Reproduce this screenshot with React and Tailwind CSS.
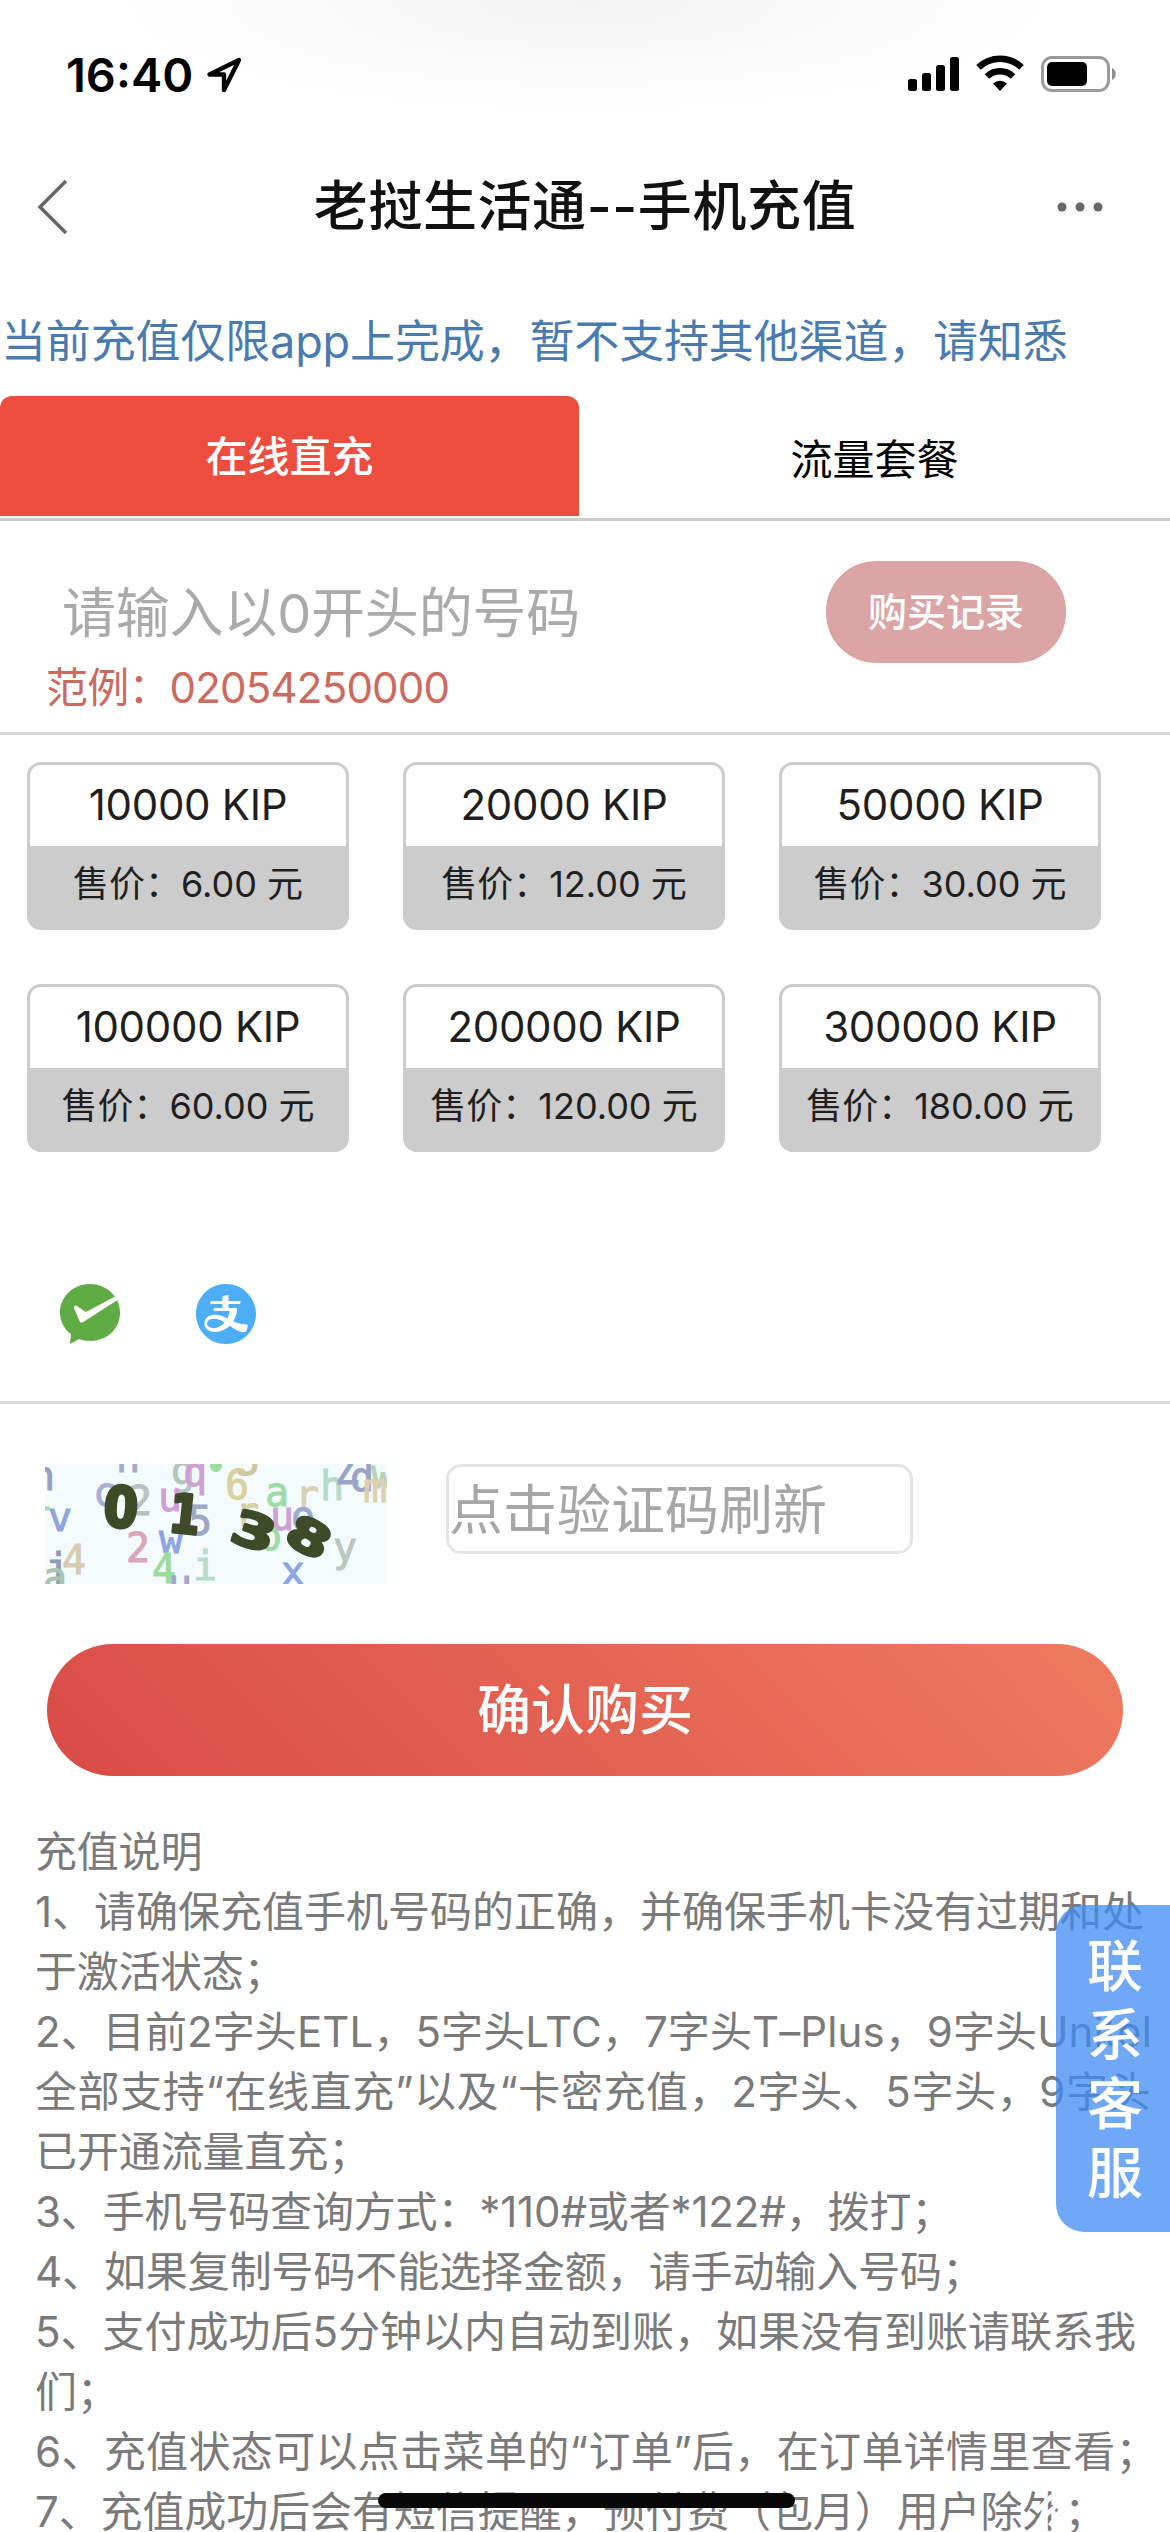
import React from 'react';
import { AiFillAlipayCircle } from 'react-icons/ai';

const packages = [
  { amount: '10000 KIP', price: '6.00' },
  { amount: '20000 KIP', price: '12.00' },
  { amount: '50000 KIP', price: '30.00' },
  { amount: '100000 KIP', price: '60.00' },
  { amount: '200000 KIP', price: '120.00' },
  { amount: '300000 KIP', price: '180.00' },
];

const notes = [
  { text: '充值说明', tracking: 'tracking-[-0.2px]' },
  { text: '1、请确保充值手机号码的正确，并确保手机卡没有过期和处', tracking: 'tracking-normal' },
  { text: '于激活状态；', tracking: 'tracking-[-0.3px]' },
  { text: '2、目前2字头ETL，5字头LTC，7字头T–Plus，9字头Unitel', tracking: 'tracking-[0.1px]' },
  { text: '全部支持“在线直充”以及“卡密充值，2字头、5字头，9字头', tracking: 'tracking-[0.6px]' },
  { text: '已开通流量直充；', tracking: 'tracking-[-0.1px]' },
  { text: '3、手机号码查询方式：*110#或者*122#，拨打；', tracking: 'tracking-[-0.15px]' },
  { text: '4、如果复制号码不能选择金额，请手动输入号码；', tracking: 'tracking-[-0.1px]' },
  { text: '5、支付成功后5分钟以内自动到账，如果没有到账请联系我', tracking: 'tracking-normal' },
  { text: '们；', tracking: 'tracking-[-0.3px]' },
  { text: '6、充值状态可以点击菜单的“订单”后，在订单详情里查看；', tracking: 'tracking-[0.35px]' },
  { text: '7、充值成功后会有短信提醒，预付费（包月）用户除外；', tracking: 'tracking-[-0.1px]' },
];

// Background letters of the captcha: [char, x, baseline, color]
const noise = [
  ['h', -2, 26, '#9aa0c0'],
  ['n', 83, 8, '#a5aac8'],
  ['v', 15, 67, '#8fa4de'],
  ['l', -4, 46, '#9fe0a8'],
  ['4', 29, 110, '#d6cdb0'],
  ['j', 12, 118, '#8f9ab8'],
  ['a', 10, 127, '#a9c4b0'],
  ['2', 93, 98, '#dba6bb'],
  ['w', 126, 89, '#8fa4e4'],
  ['4', 119, 119, '#9bdc9b'],
  ['u', 135, 134, '#a0a5c4'],
  ['i', 160, 116, '#b9dcc8'],
  ['g', 138, 20, '#b4c4c0'],
  ['q', 150, 22, '#cf9fd6'],
  ['u', 125, 47, '#cf9fd6'],
  ['5', 155, 71, '#a0a8c8'],
  ['c', 60, 42, '#a8b0d8'],
  ['2', 95, 51, '#bcc0c0'],
  ['6', 192, 35, '#d9d29c'],
  ['5', 203, 11, '#cfc8a0'],
  ['r', 202, 62, '#d8cfa0'],
  ['a', 232, 42, '#9fdca8'],
  ['r', 262, 45, '#dccfb4'],
  ['h', 287, 36, '#b4dcc8'],
  ['Z', 302, 20, '#9ba4c8'],
  ['d', 317, 27, '#9ba4c8'],
  ['w', 338, 24, '#b8d4b8'],
  ['m', 330, 38, '#dcd0b0'],
  ['u', 237, 66, '#cf9fd6'],
  ['o', 258, 66, '#9ba8d0'],
  ['o', 225, 86, '#9fdca8'],
  ['y', 300, 97, '#b8c8c0'],
  ['x', 248, 121, '#8fa4e4'],
  ['_', 264, 114, '#8fa4e4'],
];

const Captcha = () => (
  <svg width="342" height="120" viewBox="0 0 342 120" className="block bg-[#f4fbfd]">
    <g fontFamily="DejaVu Sans Mono, monospace" fontSize="40" textAnchor="middle">
      {noise.map(([char, x, y, color], i) => (
        <text key={i} x={x} y={y} fill={color} stroke={color} strokeWidth="1">{char}</text>
      ))}
    </g>
    <circle cx="171" cy="2" r="6" fill="#9bdc9b" />
    <g
      fontFamily="DejaVu Sans, sans-serif"
      fontWeight="700"
      fontSize="56"
      textAnchor="middle"
      fill="#3e4a28"
      stroke="#3e4a28"
      strokeWidth="3.5"
      strokeLinejoin="round"
    >
      <text transform="translate(76 43) rotate(4) scale(.88 1)" y="20">0</text>
      <text transform="translate(140 50) rotate(6) scale(.8 .95)" y="20">1</text>
      <text transform="translate(209 67) rotate(18) scale(1.12 .84)" y="20">3</text>
      <text transform="translate(264 73) rotate(28) scale(1.12 .82)" y="20">8</text>
    </g>
  </svg>
);

const StatusBar = () => (
  <div className="flex h-[132px] items-start justify-between bg-[radial-gradient(ellipse_460px_110px_at_585px_0px,#f4f4f4_0%,#f8f8f8_50%,#ffffff_100%)] pl-[66px] pr-[53px]">
    <div className="flex items-center pt-[44px]">
      <span className="w-[140px] text-[47px] font-semibold leading-[62px] text-black">16:40</span>
      <svg width="38" height="38" viewBox="0 0 38 38" fill="none">
        <path d="M33 4 L3.5 18.500 H18 V34 Z" stroke="#000" strokeWidth="4.4" strokeLinejoin="round" />
      </svg>
    </div>
    <svg width="210" height="40" viewBox="0 0 210 40" className="mt-[54px]">
      <rect x="1" y="25" width="9" height="12" rx="2.5" />
      <rect x="15" y="19" width="9" height="18" rx="2.5" />
      <rect x="29" y="11" width="9" height="26" rx="2.5" />
      <rect x="43" y="3" width="9" height="34" rx="2.5" />
      <path d="M93 37 L86 29.500 A10.500 10.500 0 0 1 100 29.500 Z" />
      <path d="M80 22.500 A18.500 18.500 0 0 1 106 22.500" fill="none" stroke="#000" strokeWidth="6.500" />
      <path d="M71.500 13.300 A31 31 0 0 1 114.500 13.300" fill="none" stroke="#000" strokeWidth="6.500" />
      <rect x="135.500" y="3.500" width="66" height="33" rx="9.500" fill="none" stroke="#9b9b9b" strokeWidth="3" />
      <rect x="140" y="8" width="40" height="24" rx="5" />
      <path d="M205 14 C210 16 210 24 205 26 Z" fill="#8e8e8e" />
    </svg>
  </div>
);

const PackageCard = ({ amount, price }) => (
  <button className="h-[168px] w-[322px] overflow-hidden rounded-[14px] border-[3px] border-[#cccccc] bg-[#cccccc] text-[#1f1f1f]">
    <div className="h-[81px] bg-white text-[42px] leading-[79px] tracking-[-0.3px]">{amount}</div>
    <div className="h-[81px] whitespace-pre text-[36px] leading-[76px]">售价：{price} 元</div>
  </button>
);

const App = () => {
  return (
    <div className="relative h-[2532px] w-[1170px] overflow-hidden bg-white font-['Inter','Noto_Sans_CJK_SC',sans-serif]">
      <StatusBar />

      {/* Title bar */}
      <header className="flex h-[150px] items-center justify-between">
        <div className="w-[200px] pl-[36px]">
          <svg width="34" height="56" viewBox="0 0 34 56" fill="none">
            <path d="M30 2 L4 28 L30 54" stroke="#666" strokeWidth="3.500" />
          </svg>
        </div>
        <h1 className="text-[54px] font-medium leading-none tracking-[0.6px] text-[#111]">老挝生活通--手机充值</h1>
        <div className="flex w-[200px] justify-end pr-[65px]">
          <svg width="50" height="10" viewBox="0 0 50 10" fill="#666">
            <circle cx="7" cy="5" r="4.500" />
            <circle cx="25" cy="5" r="4.500" />
            <circle cx="43" cy="5" r="4.500" />
          </svg>
        </div>
      </header>

      <p className="h-[114px] whitespace-nowrap pl-[1px] text-[45px] leading-[120px] tracking-[-0.15px] text-[#4a7bb0]">
        当前充值仅限app上完成，暂不支持其他渠道，请知悉
      </p>

      {/* Tabs */}
      <div className="flex h-[125px] items-start border-b-[3px] border-[#cccccc] text-center text-[42px]">
        <div className="h-[120px] w-[579px] rounded-t-[12px] bg-[#ec4d3f] font-medium leading-[121px] text-white">在线直充</div>
        <div className="h-[120px] flex-1 leading-[127px] text-black">流量套餐</div>
      </div>

      {/* Phone number */}
      <div className="flex h-[214px] items-start justify-between border-b-[3px] border-[#d6d6d6] pl-[46px] pr-[104px]">
        <div className="pt-[51px]">
          <div className="h-[84px] pl-[16px] text-[54px] leading-[84px] tracking-[-0.2px] text-[#aaaaaa]">请输入以0开头的号码</div>
          <div className="text-[42px] leading-[64px] tracking-[-0.8px] text-[#cd6a5f]">范例：02054250000</div>
        </div>
        <button className="mt-[40px] h-[102px] w-[240px] rounded-[50px] bg-[#dca5a5] text-[39px] font-medium leading-[98px] text-white">
          购买记录
        </button>
      </div>

      <div className="grid h-[549px] grid-cols-[322px_322px_322px] content-start gap-[54px] pl-[27px] pt-[27px]">
        {packages.map(p => (
          <PackageCard key={p.amount} amount={p.amount} price={p.price} />
        ))}
      </div>

      {/* Payment methods */}
      <div className="flex h-[120px] items-start gap-[76px] border-b-[3px] border-[#d8dada] pl-[60px]">
        <svg width="60" height="60" viewBox="0 0 60 60">
          <path d="M30 0 C47 0 60 13 60 28.500 C60 45 47 57 30 57 C26 57 22 56.300 19 55 L10 60 L11 50 C4 45 0 37 0 28.500 C0 13 13 0 30 0 Z" fill="#5fac45" />
          <path d="M55 12.500 L26 28 L17 22 C15 21 13.500 22 14 24 L19.500 37 C20.500 39 22 39 24 37.500 L57.500 16 Z" fill="#fff" />
        </svg>
        <AiFillAlipayCircle viewBox="64 64 896 896" className="size-[60px] text-[#4dadf7]" />
      </div>

      {/* Captcha */}
      <div className="flex h-[240px] items-start gap-[59px] pl-[45px] pt-[60px]">
        <Captcha />
        <div className="h-[90px] w-[467px] rounded-[15px] border-[3px] border-[#e5e5e5] text-[54px] leading-[88px] text-[#a6a6a6]">
          点击验证码刷新
        </div>
      </div>

      <button className="mx-[47px] block h-[132px] w-[1076px] rounded-full bg-[linear-gradient(45deg,#d94b46,#ee7b60)] text-[54px] font-medium leading-[129px] text-white">
        确认购买
      </button>

      <div className="pl-[35px] pt-[46px] text-[42px] leading-[60px] text-[#7a7a7a]">
        {notes.map(note => (
          <p key={note.text} className={`whitespace-nowrap ${note.tracking}`}>{note.text}</p>
        ))}
      </div>

      {/* Floating support button */}
      <div className="absolute right-0 top-[1905px] h-[327px] w-[114px] rounded-l-[28px] bg-[#3f8bf4]/75 pl-[31px] pt-[27px] text-[56px] font-medium leading-[69px] text-white">
        <div>联</div>
        <div>系</div>
        <div>客</div>
        <div>服</div>
      </div>

      {/* Faint white marks in the bottom corner */}
      <svg width="50" height="44" viewBox="0 0 50 44" className="absolute left-[1034px] top-[2488px]" fill="none" stroke="#fff">
        <path d="M2 24 L18 8 M4 34 L22 18 M16 38 L34 12 M27 2 V18 M27 28 L46 22" strokeWidth="5" />
      </svg>

      {/* Home indicator */}
      <div className="absolute left-[378px] top-[2493px] h-[15px] w-[417px] rounded-full bg-[#080808]" />
    </div>
  );
};

export default App;
